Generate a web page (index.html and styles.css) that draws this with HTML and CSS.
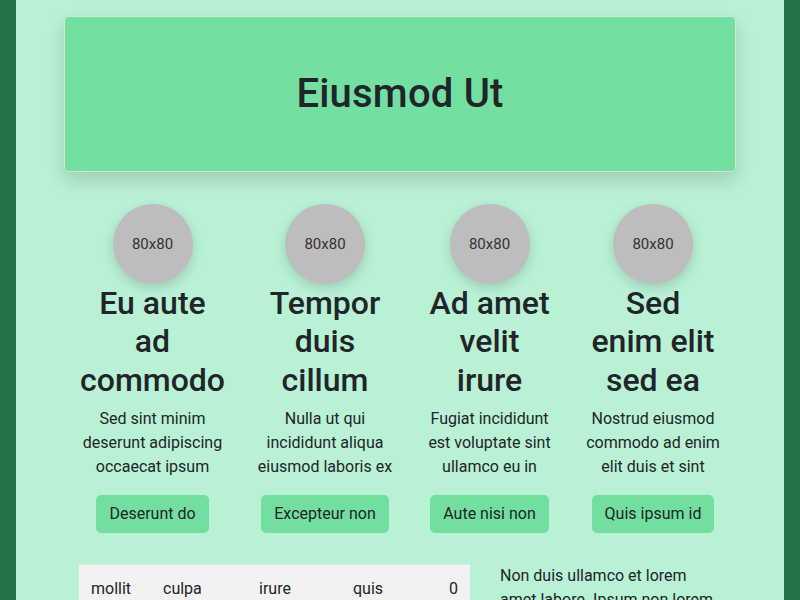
FILE: index.html
```html
<!DOCTYPE html>
<html lang="en">
<head>
<meta charset="utf-8">
<title>Eiusmod Ut</title>
<link rel="stylesheet" href="styles.css">
</head>
<body>
<main class="page">
  <header class="hero">
    <h1 class="hero-title">Eiusmod Ut</h1>
  </header>

  <section class="features">
    <div class="feature">
      <div class="avatar">80x80</div>
      <h2 class="feature-title">Eu aute<br>ad<br>commodo</h2>
      <p class="feature-text">Sed sint minim deserunt adipiscing occaecat ipsum</p>
      <button class="btn">Deserunt do</button>
    </div>
    <div class="feature">
      <div class="avatar">80x80</div>
      <h2 class="feature-title">Tempor<br>duis<br>cillum</h2>
      <p class="feature-text">Nulla ut qui incididunt aliqua eiusmod laboris ex</p>
      <button class="btn">Excepteur non</button>
    </div>
    <div class="feature">
      <div class="avatar">80x80</div>
      <h2 class="feature-title">Ad amet<br>velit<br>irure</h2>
      <p class="feature-text">Fugiat incididunt est voluptate sint ullamco eu in</p>
      <button class="btn">Aute nisi non</button>
    </div>
    <div class="feature">
      <div class="avatar">80x80</div>
      <h2 class="feature-title">Sed<br>enim elit<br>sed ea</h2>
      <p class="feature-text">Nostrud eiusmod commodo ad enim elit duis et sint</p>
      <button class="btn">Quis ipsum id</button>
    </div>
  </section>

  <section class="details">
    <table class="data-table">
      <colgroup>
        <col class="c1"><col class="c2"><col class="c3"><col class="c4"><col class="c5">
      </colgroup>
      <tbody>
        <tr><td>mollit</td><td>culpa</td><td>irure</td><td>quis</td><td class="num">0</td></tr>
        <tr><td>aliqua</td><td>magna</td><td>dolor</td><td>elit</td><td class="num">3</td></tr>
      </tbody>
    </table>
    <p class="details-text">Non duis ullamco et lorem amet labore. Ipsum non lorem sint magna dolore aliqua velit esse.</p>
  </section>
</main>
</body>
</html>
```
FILE: styles.css
```css
* { box-sizing: border-box; }

html, body {
  margin: 0;
  padding: 0;
}

body {
  background: #227447;
  font-family: Roboto, "Liberation Sans", sans-serif;
  font-size: 16px;
  line-height: 1.5;
  color: #212529;
}

.page {
  width: 768px;
  min-height: 100vh;
  margin: 0 auto;
  padding: 16px 48px 32px;
  background: #b8f1d3;
}

.hero {
  background: #73dfa1;
  border: 1px solid #d3e6da;
  border-radius: 4px;
  box-shadow: 0 8px 18px rgba(0, 0, 0, 0.15);
  padding: 53px 16px;
  text-align: center;
}

.hero-title {
  margin: 0;
  font-size: 40px;
  line-height: 48px;
  font-weight: 500;
  letter-spacing: 0.2px;
}

.features {
  display: grid;
  grid-template-columns: 177fr 168fr 161fr 166fr;
  margin-top: 32px;
}

.feature {
  display: flex;
  flex-direction: column;
  align-items: center;
  text-align: center;
  padding: 0 12px;
}

.avatar {
  width: 80px;
  height: 80px;
  border-radius: 50%;
  background: #bdbdbd;
  box-shadow: 0 4px 12px rgba(0, 0, 0, 0.15);
  display: flex;
  align-items: center;
  justify-content: center;
  font-size: 15px;
  color: #333;
}

.feature-title {
  margin: 0 0 8px;
  font-size: 32px;
  line-height: 1.2;
  font-weight: 500;
}

.feature-text {
  margin: 0 0 16px;
}

.btn {
  font-family: inherit;
  font-size: 16px;
  line-height: 24px;
  color: #212529;
  background: #72dea0;
  border: 1px solid #72dea0;
  border-radius: 5px;
  padding: 6px 12px;
}

.details {
  display: grid;
  grid-template-columns: 391px 1fr;
  gap: 30px;
  margin-top: 31px;
  padding: 0 15px;
  align-items: start;
}

.data-table {
  width: 391px;
  border-collapse: collapse;
  table-layout: fixed;
  background: #f2f2f2;
  border-top: 1px solid #e2e6e4;
}

.data-table td {
  padding: 12px;
  text-align: left;
  color: #212529;
}

.data-table td.num { text-align: right; }

.c1 { width: 72px; }
.c2 { width: 96px; }
.c3 { width: 94px; }
.c4 { width: 80px; }
.c5 { width: 49px; }

.details-text {
  margin: 0;
}
```
